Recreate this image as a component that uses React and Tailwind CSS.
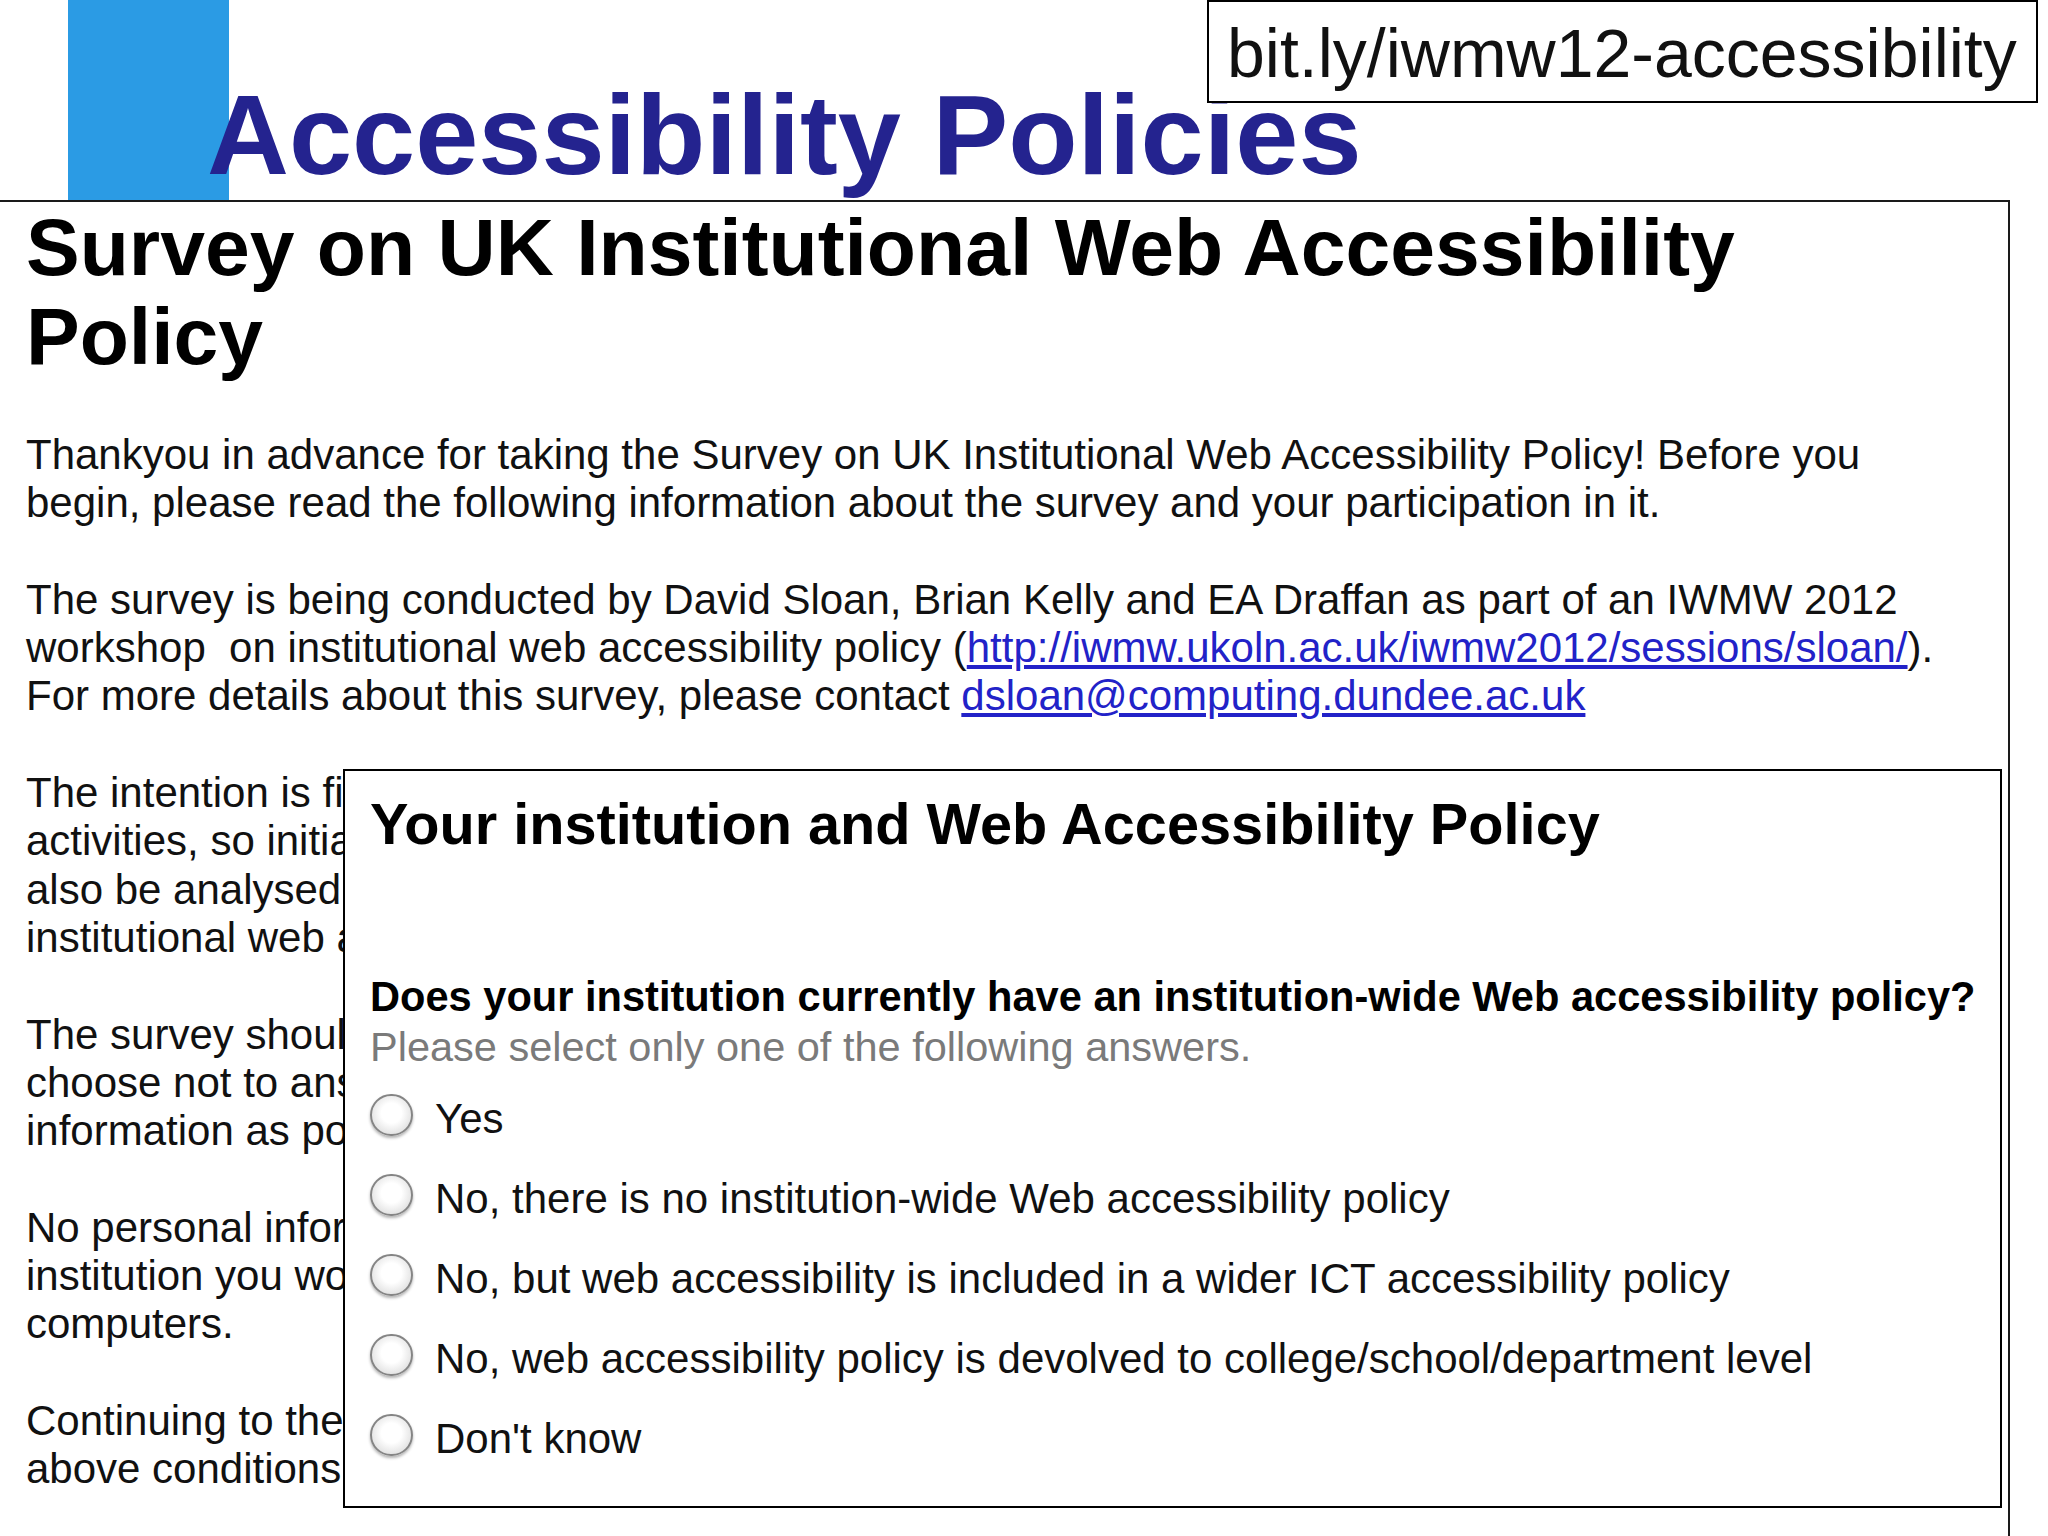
import React from "react";

// Answer options for the overlay question
const OPTIONS = [
    "Yes",
    "No, there is no institution-wide Web accessibility policy",
    "No, but web accessibility is included in a wider ICT accessibility policy",
    "No, web accessibility policy is devolved to college/school/department level",
    "Don't know",
];

const Radio = () => (
    <div className="w-[43px] h-[42px] shrink-0 rounded-full border-2 border-[#858585] bg-[radial-gradient(circle_at_50%_45%,#ffffff_35%,#e6e6e6_70%,#c9c9c9_100%)] shadow-[0_2px_3px_rgba(0,0,0,0.3)]" />
);

const App = () => {
    return (
        <div className="relative w-[2048px] h-[1536px] overflow-hidden bg-white text-[#111] font-['Liberation_Sans',Arial,sans-serif]">
            {/* Slide header: blue bar and title */}
            <header className="flex h-[200px]">
                <div className="ml-[68px] w-[161px] h-full bg-[#2b9be4]" />
                <h1 className="relative -ml-[22px] mt-[78px] text-[113.5px] leading-none font-bold text-[#24238f] whitespace-nowrap">
                    Accessibility Policies
                </h1>
            </header>

            {/* Short link box, top right */}
            <div className="absolute left-[1207px] top-0 w-[831px] h-[103px] border-2 border-black bg-white pl-[18px] pt-[17px] text-[68px] leading-[68px] whitespace-nowrap">
                bit.ly/iwmw12-accessibility
            </div>

            {/* Screenshot of the survey page */}
            <section className="relative w-[2010px] h-[1336px] border-t-2 border-r-2 border-[#1a1a1a] pl-[26px] pt-[1px]">
                <h2 className="text-[80.5px] leading-[89px] font-bold text-black">
                    Survey on UK Institutional Web Accessibility
                    <br />
                    Policy
                </h2>

                <div className="mt-[50px] text-[42px] leading-[48.3px] whitespace-nowrap">
                    <p className="mb-[48.3px]">
                        Thankyou in advance for taking the Survey on UK Institutional Web Accessibility Policy! Before you
                        <br />
                        begin, please read the following information about the survey and your participation in it.
                    </p>
                    <p className="mb-[48.3px]">
                        The survey is being conducted by David Sloan, Brian Kelly and EA Draffan as part of an IWMW 2012
                        <br />
                        workshop&nbsp; on institutional web accessibility policy (
                        <a href="#" className="text-[#2222c8] underline">
                            http://iwmw.ukoln.ac.uk/iwmw2012/sessions/sloan/
                        </a>
                        ).
                        <br />
                        For more details about this survey, please contact{" "}
                        <a href="#" className="text-[#2222c8] underline">
                            dsloan@computing.dundee.ac.uk
                        </a>
                    </p>
                    <p className="mb-[48.3px]">
                        The intention is firstly to inform discussion at the workshop and related
                        <br />
                        activities, so initial findings will be presented at IWMW 2012. Results will
                        <br />
                        also be analysed and published to help inform future work on
                        <br />
                        institutional web accessibility policy.
                    </p>
                    <p className="mb-[48.3px]">
                        The survey should take around 10 minutes to complete. You may
                        <br />
                        choose not to answer any question, but please provide as much
                        <br />
                        information as possible.
                    </p>
                    <p className="mb-[48.3px]">
                        No personal information will be collected, other than the name of the
                        <br />
                        institution you work for. No cookies will be placed on your
                        <br />
                        computers.
                    </p>
                    <p>
                        Continuing to the survey indicates that you agree to the
                        <br />
                        above conditions.
                    </p>
                </div>

                {/* Question panel pasted over the intro text */}
                <div className="absolute left-[343px] top-[567px] w-[1659px] h-[739px] border-2 border-black bg-white pl-[25px] pt-[21px]">
                    <h3 className="text-[57.7px] leading-[64px] font-bold text-black whitespace-nowrap">
                        Your institution and Web Accessibility Policy
                    </h3>
                    <p className="mt-[116px] text-[41.6px] leading-[50px] font-bold text-black whitespace-nowrap">
                        Does your institution currently have an institution-wide Web accessibility policy?
                    </p>
                    <p className="text-[41.5px] leading-[50px] text-[#7a7a7a] whitespace-nowrap">
                        Please select only one of the following answers.
                    </p>
                    <ul className="mt-[3px]">
                        {OPTIONS.map((label) => (
                            <li key={label} className="flex items-center h-[80px] gap-[22px]">
                                <Radio />
                                <span className="mt-[8px] text-[42px] leading-none whitespace-nowrap">{label}</span>
                            </li>
                        ))}
                    </ul>
                </div>
            </section>
        </div>
    );
};

export default App;
